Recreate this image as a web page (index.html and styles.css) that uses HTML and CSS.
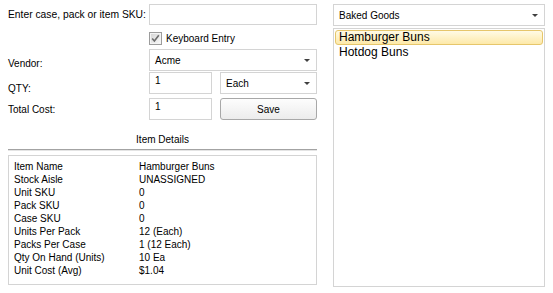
FILE: index.html
```html
<!DOCTYPE html>
<html lang="en">
<head>
    <meta charset="UTF-8">
    <title>Item Lookup</title>
    <link rel="stylesheet" href="styles.css">
</head>
<body>

<div class="page">
    <div class="left">
        <div class="form">
            <label class="lbl lbl-sku">Enter case, pack or item SKU:</label>
            <div class="field"><input type="text" class="txt wide"></div>

            <div></div>
            <div class="check-row">
                <span class="checkbox">
                    <svg width="13" height="13" viewBox="0 0 13 13">
                        <defs>
                            <linearGradient id="cbg" x1="0" y1="0" x2="1" y2="1">
                                <stop offset="0" stop-color="#d6d6d6"/>
                                <stop offset="1" stop-color="#f7f7f7"/>
                            </linearGradient>
                        </defs>
                        <rect x="0.5" y="0.5" width="12" height="12" fill="#f4f4f4" stroke="#9c9c9c"/>
                        <rect x="2" y="2" width="9" height="9" fill="url(#cbg)"/>
                        <path d="M3.2 6.4 L5.4 9 L9.8 3.2" fill="none" stroke="#6d6d6d" stroke-width="1.6"/>
                    </svg>
                </span>
                <span>Keyboard Entry</span>
            </div>

            <label class="lbl lbl-vendor">Vendor:</label>
            <div class="select wide"><span>Acme</span><i class="arrow"></i></div>

            <label class="lbl lbl-qty">QTY:</label>
            <div class="pair">
                <input type="text" class="txt short" value="1">
                <div class="select unit"><span>Each</span><i class="arrow"></i></div>
            </div>

            <label class="lbl lbl-cost">Total Cost:</label>
            <div class="pair">
                <input type="text" class="txt short" value="1">
                <button class="save-btn">Save</button>
            </div>
        </div>

        <div class="section-title">Item Details</div>
        <div class="details">
            <div class="d-row"><span class="d-key">Item Name</span><span>Hamburger Buns</span></div>
            <div class="d-row"><span class="d-key">Stock Aisle</span><span>UNASSIGNED</span></div>
            <div class="d-row"><span class="d-key">Unit SKU</span><span>0</span></div>
            <div class="d-row"><span class="d-key">Pack SKU</span><span>0</span></div>
            <div class="d-row"><span class="d-key">Case SKU</span><span>0</span></div>
            <div class="d-row"><span class="d-key">Units Per Pack</span><span>12 (Each)</span></div>
            <div class="d-row"><span class="d-key">Packs Per Case</span><span>1 (12 Each)</span></div>
            <div class="d-row"><span class="d-key">Qty On Hand (Units)</span><span>10 Ea</span></div>
            <div class="d-row"><span class="d-key">Unit Cost (Avg)</span><span>$1.04</span></div>
        </div>
    </div>

    <div class="right">
        <div class="select category"><span>Baked Goods</span><i class="arrow"></i></div>
        <div class="list">
            <div class="list-item selected">Hamburger Buns</div>
            <div class="list-item">Hotdog Buns</div>
        </div>
    </div>
</div>

</body>
</html>
```

FILE: styles.css
```css
body {
    margin: 0;
    background-color: #ffffff;
    font-family: "Liberation Sans", Arial, sans-serif;
    font-size: 10px;
    color: #000000;
}
.page {
    display: flex;
    gap: 16px;
    padding: 4px 8px 0 8px;
}
.left {
    width: 309px;
}
.right {
    width: 213px;
}
.form {
    display: grid;
    grid-template-columns: 141px 168px;
    grid-template-rows: 21px 22px 22px 25px 22px;
    row-gap: 1px;
}
.lbl {
    align-self: center;
    white-space: nowrap;
}
.lbl-sku {
    font-size: 10.3px;
}
.lbl-vendor {
    margin-top: 7px;
}
.lbl-qty {
    margin-top: 7px;
}
.lbl-cost {
    margin-top: 1px;
}
.txt {
    box-sizing: border-box;
    height: 21px;
    border: 1px solid #d4d4d4;
    font-family: inherit;
    font-size: 10px;
    padding: 0 0 6px 5px;
    margin: 0;
    outline: none;
}
.wide {
    width: 168px;
}
.short {
    width: 63px;
}
.check-row {
    display: flex;
    align-items: center;
    gap: 4px;
    padding-top: 6px;
    height: 13px;
}
.checkbox {
    display: flex;
}
.select {
    box-sizing: border-box;
    height: 22px;
    border: 1px solid #d4d4d4;
    display: flex;
    align-items: center;
    justify-content: space-between;
    padding: 0 6px 0 5px;
    background-color: #ffffff;
}
.arrow {
    width: 0;
    height: 0;
    border-left: 3px solid transparent;
    border-right: 3px solid transparent;
    border-top: 3px solid #404040;
}
.pair {
    display: flex;
    gap: 8px;
}
.pair .txt {
    height: 22px;
}
.unit {
    width: 98px;
}
.save-btn {
    box-sizing: border-box;
    width: 98px;
    height: 22px;
    margin: 0;
    border: 1px solid #a8a8a8;
    border-radius: 3px;
    background: linear-gradient(#fdfdfd, #ececec);
    font-family: inherit;
    font-size: 10px;
    color: #000000;
}
.section-title {
    text-align: center;
    margin-top: 14px;
    padding-bottom: 4px;
    border-bottom: 1px solid #a3a3a3;
    box-shadow: 0 1px 0 #e4e4e4;
}
.details {
    box-sizing: border-box;
    margin-top: 5px;
    height: 130px;
    border: 1px solid #d4d4d4;
    padding: 4px 5px;
}
.d-row {
    display: flex;
    height: 13px;
    line-height: 13px;
}
.d-key {
    width: 125px;
}
.category {
    width: 212px;
}
.list {
    box-sizing: border-box;
    margin-top: 2px;
    width: 212px;
    height: 259px;
    border: 1px solid #d4d4d4;
    padding: 1px;
    font-size: 12px;
}
.list-item {
    height: 13px;
    line-height: 13px;
    padding-left: 3px;
    border: 1px solid transparent;
}
.list-item.selected {
    border-color: #e6c66b;
    border-radius: 3px;
    background: linear-gradient(#fffbe6, #fde9a9);
}
```
